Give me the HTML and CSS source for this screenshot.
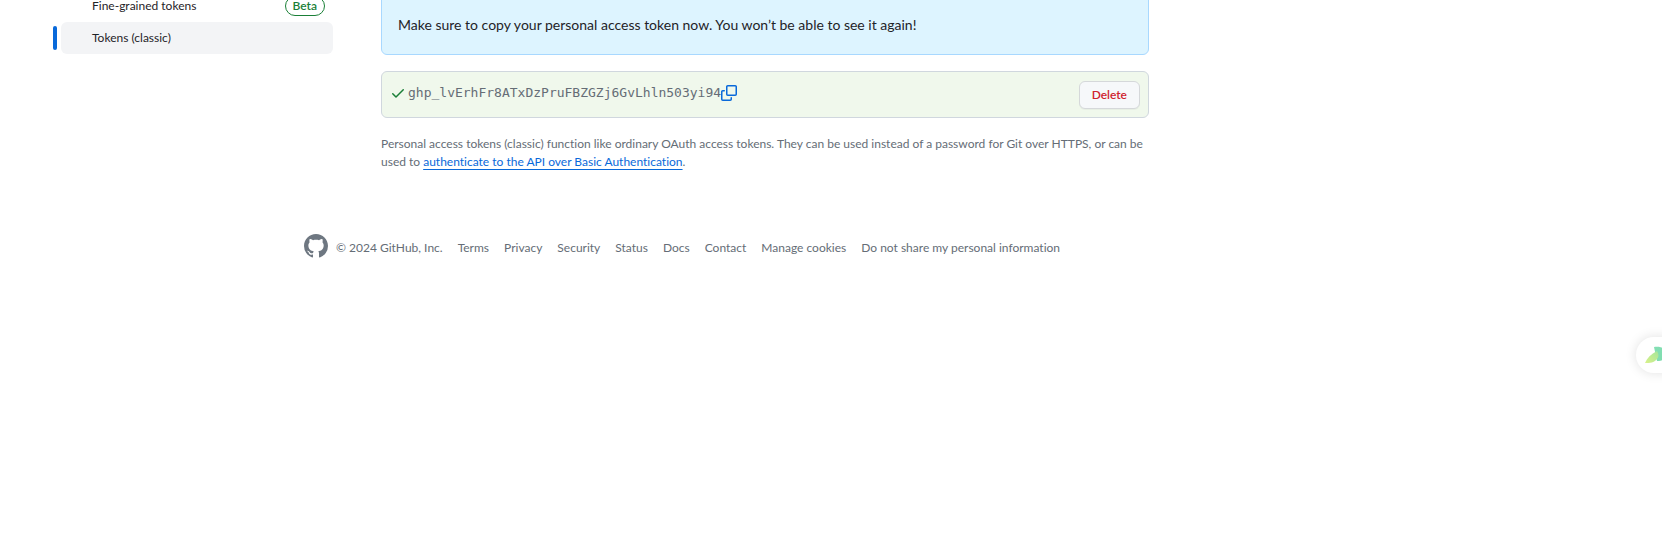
FILE: index.html
```html
<!DOCTYPE html>
<html lang="en">
<head>
<meta charset="utf-8">
<title>Personal access tokens (classic)</title>
<link rel="stylesheet" href="styles.css">
</head>
<body>
<div class="layout">
  <nav class="sidebar" aria-label="Developer settings">
    <a class="nav-item" href="#"><span>Fine-grained tokens</span><span class="badge">Beta</span></a>
    <a class="nav-item selected" href="#" aria-current="page"><span>Tokens (classic)</span></a>
  </nav>
  <main class="content">
    <p class="flash">Make sure to copy your personal access token now. You won’t be able to see it again!</p>
    <div class="token-row">
      <div class="token">
        <svg class="check" width="16" height="16" viewBox="0 0 16 16" aria-hidden="true"><path d="M13.78 4.22a.75.75 0 0 1 0 1.06l-7.25 7.25a.75.75 0 0 1-1.06 0L2.22 9.28a.751.751 0 0 1 .018-1.042.751.751 0 0 1 1.042-.018L6 10.94l6.72-6.72a.75.75 0 0 1 1.06 0Z"/></svg>
        <code class="token-value">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</code>
        <button class="copy" type="button" aria-label="Copy token">
          <svg width="16" height="16" viewBox="0 0 16 16" aria-hidden="true"><path d="M0 6.75C0 5.784.784 5 1.75 5h1.5a.75.75 0 0 1 0 1.5h-1.5a.25.25 0 0 0-.25.25v7.5c0 .138.112.25.25.25h7.5a.25.25 0 0 0 .25-.25v-1.5a.75.75 0 0 1 1.5 0v1.5A1.75 1.75 0 0 1 9.25 16h-7.5A1.75 1.75 0 0 1 0 14.25Z"/><path d="M5 1.75C5 .784 5.784 0 6.75 0h7.5C15.216 0 16 .784 16 1.75v7.5A1.75 1.75 0 0 1 14.25 11h-7.5A1.75 1.75 0 0 1 5 9.25Zm1.75-.25a.25.25 0 0 0-.25.25v7.5c0 .138.112.25.25.25h7.5a.25.25 0 0 0 .25-.25v-7.5a.25.25 0 0 0-.25-.25Z"/></svg>
        </button>
      </div>
      <button class="delete" type="button">Delete</button>
    </div>
    <p class="note">Personal access tokens (classic) function like ordinary OAuth access tokens. They can be used instead of a password for Git over HTTPS, or can be used to <a href="#">authenticate to the API over Basic Authentication</a>.</p>
  </main>
</div>
<footer class="footer">
  <svg class="mark" width="24" height="24" viewBox="0 0 16 16" role="img" aria-label="GitHub"><path d="M8 0c4.42 0 8 3.58 8 8a8.013 8.013 0 0 1-5.45 7.59c-.4.08-.55-.17-.55-.38 0-.27.01-1.13.01-2.2 0-.75-.25-1.23-.54-1.48 1.78-.2 3.65-.88 3.65-3.95 0-.88-.31-1.59-.82-2.15.08-.2.36-1.02-.08-2.12 0 0-.67-.22-2.2.82-.64-.18-1.32-.27-2-.27-.68 0-1.36.09-2 .27-1.53-1.03-2.2-.82-2.2-.82-.44 1.1-.16 1.92-.08 2.12-.51.56-.82 1.28-.82 2.15 0 3.06 1.86 3.75 3.64 3.95-.23.2-.44.55-.51 1.07-.46.21-1.61.55-2.33-.66-.15-.24-.6-.83-1.23-.82-.67.01-.27.38.01.53.34.19.73.9.82 1.13.16.45.68 1.31 2.69.94 0 .67.01 1.3.01 1.49 0 .21-.15.45-.55.38A7.995 7.995 0 0 1 0 8c0-4.42 3.58-8 8-8Z"/></svg>
  <div class="footer-text">
    <span>© 2024 GitHub, Inc.</span>
    <a href="#">Terms</a>
    <a href="#">Privacy</a>
    <a href="#">Security</a>
    <a href="#">Status</a>
    <a href="#">Docs</a>
    <a href="#">Contact</a>
    <button type="button">Manage cookies</button>
    <button type="button">Do not share my personal information</button>
  </div>
</footer>
<button class="assistant" type="button" aria-label="Open assistant">
  <svg width="24" height="24" viewBox="0 0 24 24" aria-hidden="true">
    <defs>
      <linearGradient id="leaf" x1="0" y1="1" x2="1" y2="0"><stop offset="0" stop-color="#d9f28b"/><stop offset="1" stop-color="#a5e59a"/></linearGradient>
      <linearGradient id="wing" x1="0" y1="0" x2="1" y2="1"><stop offset="0" stop-color="#84dfb4"/><stop offset="1" stop-color="#7fdcae"/></linearGradient>
    </defs>
    <path fill="url(#wing)" d="M10 4c6-1 13 1 13 8-1 4-5 6-10 6Z"/>
    <path fill="url(#leaf)" d="M1 20C3 15 7 11 13 8c2 3 2 6 0 8-3 4-7 4-12 4Z"/>
  </svg>
</button>
</body>
</html>
```
FILE: styles.css
```css
* { box-sizing: border-box; }

body {
  margin: 0;
  background: #fff;
  color: #1f2328;
  font-family: Lato, "Noto Sans", sans-serif;
  font-size: 12px;
  font-variant-ligatures: none;
  line-height: 18px;
  overflow: hidden;
}

p { margin: 0; }
a { color: inherit; text-decoration: none; }
button { font: inherit; cursor: pointer; }
svg { display: block; fill: currentColor; }

/* The page is scrolled slightly past the first visible row. */
.layout {
  display: flex;
  gap: 48px;
  max-width: 1149px;
  margin-top: -10px;
  padding-left: 61px;
}

.sidebar { flex: 0 0 272px; }

.nav-item {
  position: relative;
  display: flex;
  align-items: center;
  justify-content: space-between;
  height: 32px;
  padding: 0 8px 0 31px;
  border-radius: 6px;
}

.nav-item.selected { background: #f3f4f6; }

.nav-item.selected::before {
  content: "";
  position: absolute;
  top: 4px;
  bottom: 4px;
  left: -8px;
  width: 4px;
  border-radius: 6px;
  background: #0969da;
}

.badge {
  padding: 0 7px;
  border: 1px solid #1a7f37;
  border-radius: 20px;
  color: #1a7f37;
  font-weight: 600;
}

.content { flex: 1; min-width: 0; }

.flash {
  padding: 23px 16px 19px;
  border: 1px solid #a8d8ff;
  border-radius: 6px;
  background: #ddf4ff;
  font-size: 14px;
  line-height: 21px;
}

.token-row {
  display: flex;
  align-items: flex-start;
  justify-content: space-between;
  margin: 16px 0 17px;
  padding: 9px 8px 8px;
  border: 1px solid #d0d7de;
  border-radius: 6px;
  background: #f0f8ec;
}

.token { display: flex; align-items: center; height: 24px; color: #656d76; }
.check { color: #1a7f37; }

.token-value {
  padding-left: 2px;
  font-family: "DejaVu Sans Mono", monospace;
  font-size: 13px;
}

.copy { padding: 0; border: 0; background: none; color: #0969da; }

.delete {
  height: 28px;
  padding: 0 12px;
  border: 1px solid #d5d8da;
  border-radius: 6px;
  background: #f6f8fa;
  box-shadow: 0 1px 0 rgba(31, 35, 40, 0.04);
  color: #cf222e;
  font-weight: 600;
}

.note { color: #656d76; }

.note a {
  color: #0969da;
  text-decoration: underline;
  text-underline-offset: 3px;
}

.footer {
  display: flex;
  align-items: center;
  gap: 8px;
  margin-top: 63px;
  padding-left: 304px;
  color: #656d76;
}

.mark { color: #6e7781; }
.footer-text { display: flex; gap: 15px; padding-top: 3px; }
.footer-text button { padding: 0; border: 0; background: none; color: inherit; }

.assistant {
  position: fixed;
  top: 337px;
  right: -18px;
  height: 36px;
  padding: 0 12px 0 8px;
  border: 0;
  border-radius: 18px;
  background: #fff;
  box-shadow: 0 0 12px rgba(0, 0, 0, 0.12);
}
```
